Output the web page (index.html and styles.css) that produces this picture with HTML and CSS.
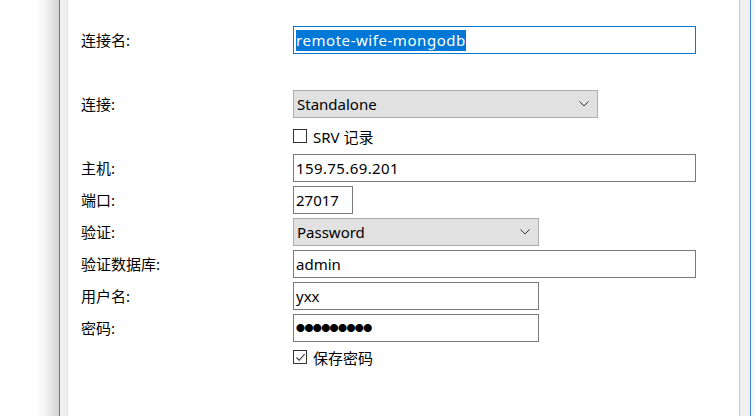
FILE: index.html
```html
<!DOCTYPE html>
<html lang="zh-CN">
<head>
<meta charset="utf-8">
<title>连接</title>
<link rel="stylesheet" href="styles.css">
</head>
<body>
<div class="screen">
  <div class="shade"></div>
  <div class="frame">
    <div class="panel">
      <div class="peek"><span class="peek-a">连接字符串</span><span class="peek-b">数据库</span></div>

      <div class="row row-name">
        <div class="label">连接名:</div>
        <div class="field wide focus"><span class="sel">remote-wife-mongodb</span></div>
      </div>

      <div class="row row-conn">
        <div class="label">连接:</div>
        <div class="select w-conn"><span>Standalone</span>
          <svg class="chev" width="10" height="6" viewBox="0 0 10 6"><path d="M0.5 0.5 L5 5 L9.5 0.5" fill="none" stroke="#333" stroke-width="1"/></svg>
        </div>
      </div>

      <div class="row row-check row-srv">
        <div></div>
        <div class="check"><span class="box"></span><span class="check-text">SRV 记录</span></div>
      </div>

      <div class="row row-field">
        <div class="label">主机:</div>
        <div class="field wide host">159.75.69.201</div>
      </div>
      <div class="row row-field">
        <div class="label">端口:</div>
        <div class="field w-port">27017</div>
      </div>
      <div class="row row-field">
        <div class="label">验证:</div>
        <div class="select w-mid"><span>Password</span>
          <svg class="chev" width="10" height="6" viewBox="0 0 10 6"><path d="M0.5 0.5 L5 5 L9.5 0.5" fill="none" stroke="#333" stroke-width="1"/></svg>
        </div>
      </div>
      <div class="row row-field">
        <div class="label">验证数据库:</div>
        <div class="field wide">admin</div>
      </div>
      <div class="row row-field">
        <div class="label">用户名:</div>
        <div class="field w-mid">yxx</div>
      </div>
      <div class="row row-field">
        <div class="label">密码:</div>
        <div class="field w-mid dots">●●●●●●●●●</div>
      </div>

      <div class="row row-check row-save">
        <div></div>
        <div class="check"><span class="box checked"><svg width="11" height="11" viewBox="0 0 11 11"><path d="M1.5 5.5 L4.2 8.3 L9.6 2.2" fill="none" stroke="#333" stroke-width="1.1"/></svg></span><span class="check-text">保存密码</span></div>
      </div>
    </div>
  </div>
  <div class="tail"></div>
</div>
</body>
</html>
```

FILE: styles.css
```css
html, body {
  margin: 0;
  padding: 0;
  background: #ffffff;
  overflow: hidden;
}

body {
  font-family: "Noto Sans", "Noto Sans CJK SC", sans-serif;
  font-size: 15px;
  color: #000;
}

.screen {
  display: flex;
  width: 755px;
  height: 416px;
}

.shade {
  width: 59px;
  flex: none;
  background: linear-gradient(to right, #ffffff 0, #ffffff 36px, #f3f3f3 46px, #dedede 54px, #d2d2d2 59px);
}

.frame {
  flex: none;
  border-left: 1px solid #3a85d6;
  border-right: 1px solid #3a85d6;
  background: #f0f0f0;
  padding: 0 10px 0 7px;
  box-sizing: content-box;
  width: 673px;
}

.panel {
  height: 416px;
  background: #ffffff;
  border-left: 1px solid #e3e3e3;
  border-right: 1px solid #c8c8c8;
  padding-left: 13px;
  box-sizing: border-box;
  overflow: hidden;
}

.tail {
  flex: 1;
  background: #f7f7f7;
}

.peek {
  height: 20px;
  line-height: 20px;
  margin-top: -17px;
  display: flex;
  padding-left: 213px;
  font-size: 13px;
}

.peek-a {
  color: #b8b8b8;
  width: 181px;
}

.peek-b {
  color: #333;
}

.row {
  display: grid;
  grid-template-columns: 212px auto;
  align-items: center;
  height: 28px;
}

.row-name {
  margin-top: 23px;
}

.row-conn {
  margin-top: 36px;
}

.row-srv {
  margin-top: 4px;
}

.row-field {
  margin-top: 4px;
}

.row-save {
  margin-top: 4px;
  height: 22px;
}

.label {
  line-height: 20px;
}

.field {
  box-sizing: border-box;
  height: 28px;
  border: 1px solid #7a7a7a;
  background: #fff;
  padding: 0 2px;
  line-height: 26px;
  white-space: nowrap;
  overflow: hidden;
}

.focus {
  border-color: #0078d7;
}

.sel {
  background: #0078d7;
  color: #fff;
  display: inline-block;
  line-height: 21px;
  vertical-align: middle;
  margin-top: -2px;
  letter-spacing: 0.55px;
}

.host {
  letter-spacing: 0.4px;
}

.wide {
  width: 403px;
}

.w-mid {
  width: 246px;
}

.w-port {
  width: 60px;
}

.w-conn {
  width: 305px;
}

.select {
  box-sizing: border-box;
  height: 28px;
  border: 1px solid #adadad;
  background: #e1e1e1;
  padding: 0 3px;
  line-height: 26px;
  display: flex;
  align-items: center;
  justify-content: space-between;
}

.chev {
  margin-right: 5px;
}

.dots {
  font-size: 9px;
  letter-spacing: -0.6px;
  padding-left: 2px;
}

.check {
  display: flex;
  align-items: center;
}

.box {
  box-sizing: border-box;
  width: 14px;
  height: 14px;
  border: 1px solid #333;
  background: #fff;
  display: flex;
  align-items: center;
  justify-content: center;
}

.check-text {
  margin-left: 6px;
}
```
